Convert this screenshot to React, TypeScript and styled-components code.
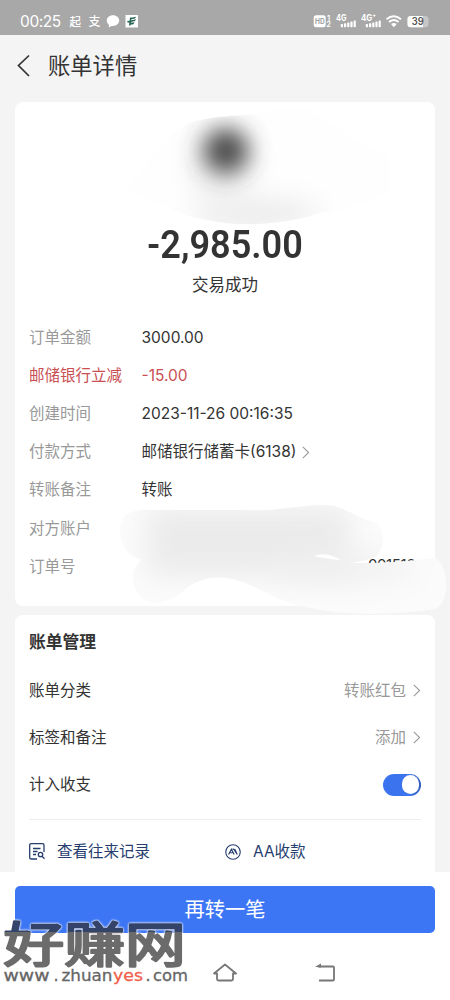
import React from 'react';
import styled, { createGlobalStyle } from 'styled-components';

const GlobalStyle = createGlobalStyle`
  * { box-sizing: border-box; }
  body { margin: 0; background: #fff; font-family: Inter, "Noto Sans CJK SC", sans-serif; color: #333; }
  svg { display: block; flex: none; }
`;
const Phone = styled.div`
  position: relative;
  width: 450px;
  height: 1000px;
  overflow: hidden;
  display: flex;
  flex-direction: column;
  background: #fff;
`;
const StatusBar = styled.div`
  height: 35px;
  flex: none;
  background: #a8a8a8;
  color: #fff;
  display: flex;
  justify-content: space-between;
  padding: 8px 20px 0 20px;
`;
const Clock = styled.span`
  font-size: 15.5px;
  line-height: 28px;
  width: 48px;
  white-space: nowrap;
  letter-spacing: -0.4px;
`;
const StatusGroup = styled.div`
  display: flex;
  height: 28px;
`;
const Page = styled.main`
  height: 837px;
  flex: none;
  overflow: hidden;
  background: #f4f4f4;
`;
const NavBar = styled.header`
  height: 67px;
  padding: 0 16px 6px;
  display: flex;
  align-items: center;
  gap: 17px;
`;
const NavTitle = styled.h1`
  margin: 0;
  font-size: 22.3px;
  line-height: 30px;
  font-weight: 400;
`;
const Card = styled.section<{ $height: number }>`
  height: ${p => p.$height}px;
  margin: 0 15px 9px;
  padding: 0 14px;
  background: #fff;
  border-radius: 8px;
`;
const Summary = styled.div`
  height: 217px;
  padding-top: 120px;
  display: flex;
  flex-direction: column;
  align-items: center;
`;
const Amount = styled.div`
  font-family: Roboto, sans-serif;
  font-size: 38px;
  line-height: 46px;
  font-weight: 600;
  white-space: nowrap;
  transform: scaleX(0.95);
`;
const State = styled.div`
  margin-top: 5px;
  font-size: 16.5px;
  line-height: 24px;
`;
const DetailRow = styled.div<{ $accent?: boolean }>`
  display: flex;
  align-items: center;
  height: 38.1px;
  font-size: 15.5px;
  line-height: 24px;
  white-space: nowrap;
  color: ${p => (p.$accent ? '#c94f52' : '#333')};
`;
const Label = styled.span<{ $accent?: boolean }>`
  width: 112.5px;
  flex: none;
  color: ${p => (p.$accent ? 'inherit' : '#999')};
`;
const Value = styled.span`
  display: flex;
  align-items: center;
  gap: 6px;
`;
const Covered = styled.span`
  padding: 0 0 3px 193px;
  font-size: 15px;
  line-height: 22px;
  letter-spacing: -0.4px;
  word-spacing: 12px;
`;
const SectionTitle = styled.h2`
  margin: 0;
  height: 52px;
  padding-top: 15px;
  font-size: 16.8px;
  line-height: 24px;
  font-weight: 700;
`;
const SettingRow = styled.div`
  height: 47.2px;
  display: flex;
  align-items: center;
  justify-content: space-between;
  font-size: 15.5px;
  line-height: 24px;
`;
const Hint = styled(Value)`
  color: #999;
  gap: 7px;
`;
const Toggle = styled.span`
  width: 38px;
  height: 22px;
  padding: 1.5px 2.5px;
  border-radius: 11px;
  display: flex;
  justify-content: flex-end;
  background: linear-gradient(90deg, #3b73ee 70%, #2f5bbd);
`;
const Knob = styled.span`
  width: 17px;
  height: 18.5px;
  border-radius: 9px;
  background: #fff;
`;
const Links = styled.div`
  margin-top: 10px;
  border-top: 1px solid #eeeeee;
  height: 65px;
  display: grid;
  grid-template-columns: 1fr 1fr;
`;
const LinkItem = styled.a`
  display: flex;
  align-items: center;
  gap: 12px;
  color: #263e6e;
  font-size: 15.5px;
  line-height: 24px;
`;
const Footer = styled.footer`
  padding: 14px 15px 0;
`;
const Submit = styled.button`
  width: 100%;
  height: 46.5px;
  padding: 2px 0 0;
  border: 0;
  border-radius: 5px;
  background: #3c76f5;
  color: #fff;
  font: 400 20.3px/30px Inter, "Noto Sans CJK SC", sans-serif;
`;
const SystemNav = styled.nav`
  display: flex;
  gap: 77px;
  padding: 29px 0 0 198px;
`;
const Overlay = styled.svg`
  position: absolute;
  left: 0;
  top: 0;
  pointer-events: none;
`;
const Halo = styled.g`
  filter: drop-shadow(0 0 1.2px rgba(255, 255, 255, 0.95)) drop-shadow(0 0 0.6px rgba(255, 255, 255, 0.8));
`;

const Chevron = () => (
  <svg width="8" height="13" viewBox="0 0 8 13" fill="none" stroke="#999" strokeWidth="1.100">
    <path d="M.8.9 6.600 6.500.8 12.100" />
  </svg>
);

const NoticeIcons = () => (
  <svg width="72" height="28" viewBox="0 0 72 28" fill="#fff">
    <text x="1.500" y="18" fontSize="11.500" fontWeight="500" fontFamily="Noto Sans CJK SC, sans-serif">起</text>
    <text x="20.500" y="18" fontSize="12" fontWeight="500" fontFamily="Noto Sans CJK SC, sans-serif">支</text>
    <path d="M45 7.200c3.600 0 6.200 2.400 6.200 5.400S48.600 18 45 18l-1.500-.1-2.800 1.500.4-2.500c-1.500-1-2.300-2.500-2.300-4.300 0-3 2.600-5.400 6.200-5.400Z" />
    <rect x="57.500" y="7" width="12.500" height="12.500" />
    <path d="M62 10 68 8.800 67 10.500 62 11.500ZM59 13.200 68 11.200 67 13 59.800 14.700ZM62.500 14.800 66.500 14.200 65.500 16.200 62 16.800ZM62 9.500 63.500 9.500 62.500 17.500 61 17.500Z" fill="#286555" />
  </svg>
);

const Bars = ({ x }: { x: number }) => (
  <g transform={`translate(${x} 0)`}>
    <rect x="0" y="16" width="2.200" height="3.200" rx=".6" />
    <rect x="3.200" y="15.300" width="2.200" height="3.900" rx=".6" />
    <rect x="6.400" y="14.500" width="2.200" height="4.700" rx=".6" />
    <rect x="9.600" y="13.500" width="2.200" height="5.700" rx=".6" />
    <rect x="12.800" y="12.500" width="2.200" height="6.700" rx=".6" />
  </g>
);

const DeviceIcons = () => (
  <svg width="118" height="28" viewBox="0 0 118 28" fill="#fff" fontFamily="Inter, sans-serif">
    <rect x="1.700" y="7.200" width="12" height="12" rx="2.500" />
    <text x="3" y="16" fontSize="7.500" fontWeight="700" fill="#a0a0a0" textLength="9.600" lengthAdjust="spacingAndGlyphs">HD</text>
    <text x="14.900" y="12.500" fontSize="7.500" fontWeight="600">1</text>
    <text x="14.200" y="19.200" fontSize="7.500" fontWeight="600">2</text>
    <text x="24" y="13" fontSize="8.500" fontWeight="700" textLength="10.500" lengthAdjust="spacingAndGlyphs">4G</text>
    <Bars x={28.800} />
    <text x="49" y="13" fontSize="8.500" fontWeight="700" textLength="15" lengthAdjust="spacingAndGlyphs">4G⁺</text>
    <Bars x={53.800} />
    <g fill="none" stroke="#fff" strokeWidth="1.900">
      <path d="M74.500 11.200Q81.800 5.500 89 11.200M77 13.900Q81.800 10 86.600 13.900" />
    </g>
    <path d="M79 16Q81.800 13.800 84.700 16L81.800 19.300Z" />
    <rect x="95.500" y="8" width="21" height="11.300" rx="3.500" fill="#c7c7c7" />
    <path d="M98.500 8H111v11.300H98.500a3 3 0 0 1-3-3V11a3 3 0 0 1 3-3Z" />
    <text x="99.700" y="17.400" fontSize="10" fontWeight="600" fill="#555" textLength="12" lengthAdjust="spacingAndGlyphs">39</text>
  </svg>
);

const Redactions = () => (
  <Overlay width="450" height="1000" viewBox="0 0 450 1000">
    <defs>
      <filter id="soft" x="-100%" y="-100%" width="300%" height="300%"><feGaussianBlur stdDeviation="11" /></filter>
      <filter id="wide" x="-60%" y="-150%" width="220%" height="400%"><feGaussianBlur stdDeviation="14" /></filter>
      <clipPath id="headShape">
        <path d="M125 190C150 160 170 130 192 122C215 116 235 116 255 114C280 108 295 104 309 110C325 120 355 143 390 155V190C370 202 345 210 320 213C287 224 245 228 205 220C175 213 165 205 125 190Z" />
      </clipPath>
      <clipPath id="lineShape">
        <path d="M145 510C120 509 116 528 123 544Q129 558 142 559C129 569 130 589 144 600C160 607 174 600 188 587C210 572 235 576 260 590C285 604 311 609 335 612C370 616 408 613 435 609C450 604 450 566 435 558C404 562 369 564 346 562.500C335 558 325 552 315 557C327 563 355 566 375 557C386 550 386 523 371 521C357 518 344 506 327 505C295 505 280 512 240 510Z" />
        <path d="M338 563Q388 565 416 562V575H338Z" />
      </clipPath>
    </defs>
    <g clipPath="url(#headShape)">
      <rect x="115" y="100" width="290" height="130" fill="#fefefe" />
      <ellipse cx="255" cy="214" rx="65" ry="14" fill="#e9e9e9" filter="url(#wide)" />
      <ellipse cx="222" cy="160" rx="30" ry="38" fill="#e7e7e7" filter="url(#wide)" />
      <circle cx="226" cy="151" r="22" fill="#4c4c4c" filter="url(#soft)" />
    </g>
    <g clipPath="url(#lineShape)">
      <rect x="110" y="500" width="345" height="118" fill="#fbfbfb" />
      <rect x="147" y="507" width="203" height="69" fill="#ebebeb" filter="url(#wide)" />
      <ellipse cx="345" cy="568" rx="75" ry="14" fill="#f0f0f0" filter="url(#wide)" />
    </g>
    <path d="M314 556Q326 551 341 560Q326 559 314 556Z" fill="#fff" />
  </Overlay>
);

const Watermark = () => (
  <Overlay width="450" height="1000" viewBox="0 0 450 1000">
    <defs>
      <linearGradient id="ink" gradientUnits="userSpaceOnUse" x1="0" y1="912" x2="0" y2="952">
        <stop offset=".51" stopColor="#344369" />
        <stop offset=".51" stopColor="#6b6b6b" />
      </linearGradient>
    </defs>
    <Halo>
      <text transform="translate(3.500 0) scale(1.265 1)" x="0" y="962.500" fontFamily="Noto Sans CJK SC, sans-serif" fontSize="48" fontWeight="400" fill="url(#ink)" stroke="url(#ink)" strokeWidth="2.400" strokeLinejoin="round">好赚网</text>
    </Halo>
    <g fontFamily="DejaVu Sans, sans-serif" fontSize="16" fill="#666" stroke="#666" strokeWidth=".3">
      <text x="3.500" y="981" textLength="46" lengthAdjust="spacingAndGlyphs">www</text>
      <text x="53.500" y="981">.</text>
      <text x="61.500" y="981" textLength="51" lengthAdjust="spacingAndGlyphs">zhuan</text>
      <text x="113" y="981" textLength="30" lengthAdjust="spacingAndGlyphs" fill="#f0604c" stroke="#f0604c">yes</text>
      <text x="145.500" y="981">.</text>
      <text x="153" y="981" textLength="35" lengthAdjust="spacingAndGlyphs">com</text>
    </g>
  </Overlay>
);

const details = [
  { label: '订单金额', value: '3000.00' },
  { label: '邮储银行立减', value: '-15.00', accent: true },
  { label: '创建时间', value: '2023-11-26 00:16:35' },
  { label: '付款方式', value: '邮储银行储蓄卡(6138)', link: true },
  { label: '转账备注', value: '转账' },
  { label: '对方账户', value: '' },
];

export default function App() {
  return (
    <Phone>
      <GlobalStyle />
      <StatusBar>
        <StatusGroup><Clock>00:25</Clock><NoticeIcons /></StatusGroup>
        <StatusGroup><DeviceIcons /></StatusGroup>
      </StatusBar>
      <Page>
        <NavBar>
          <svg width="15" height="24" viewBox="0 0 15 24" fill="none" stroke="#333" strokeWidth="1.700"><path d="M13 1.500 2.500 11.500 13 22" /></svg>
          <NavTitle>账单详情</NavTitle>
        </NavBar>
        <Card $height={504}>
          <Summary><Amount>-2,985.00</Amount><State>交易成功</State></Summary>
          {details.map(d => (
            <DetailRow key={d.label} $accent={d.accent}>
              <Label $accent={d.accent}>{d.label}</Label>
              <Value>{d.value}{d.link && <Chevron />}</Value>
            </DetailRow>
          ))}
          <DetailRow><Label>订单号</Label><Covered>26 001516</Covered></DetailRow>
        </Card>
        <Card $height={280}>
          <SectionTitle>账单管理</SectionTitle>
          <SettingRow>账单分类<Hint>转账红包<Chevron /></Hint></SettingRow>
          <SettingRow>标签和备注<Hint>添加<Chevron /></Hint></SettingRow>
          <SettingRow>计入收支<Toggle><Knob /></Toggle></SettingRow>
          <Links>
            <LinkItem>
              <svg width="16" height="17" viewBox="0 0 16 17" fill="none" stroke="#263e6e" strokeWidth="1.300">
                <path d="M8 16H2.200Q.7 16 .7 14.500V2.200Q.7.7 2.200.7H13.500Q15 .7 15 2.200V9M4 5.500H11.500M4 8.500H8.500M4 11.500H7" /><circle cx="11.500" cy="11.500" r="2.200" /><path d="m13 13.300 2.500 2.500" />
              </svg>
              查看往来记录
            </LinkItem>
            <LinkItem>
              <svg width="16" height="16" viewBox="0 0 17 17" fill="none" stroke="#263e6e" strokeWidth="1.200">
                <circle cx="8.500" cy="8.500" r="7.700" /><path d="M3.800 11.200 6.800 5.500 9.700 11.200M5.300 9.300H8M8 5.500H9.300L13 11.200M10.500 5.500 13 11.200" />
              </svg>
              AA收款
            </LinkItem>
          </Links>
        </Card>
      </Page>
      <Footer><Submit>再转一笔</Submit></Footer>
      <SystemNav>
        <svg width="40" height="22" viewBox="0 0 40 22" fill="none" stroke="#777" strokeWidth="1.800" strokeLinejoin="round"><path d="M19.500 18.500H33.500Q35 18.500 35 17V11.500H38L27 2.500 16 11.500H19V17Q19 18.500 20.500 18.500" /></svg>
        <svg width="22" height="22" viewBox="0 0 22 22" fill="none" stroke="#777" strokeWidth="1.800"><path d="M4 18.500H18Q19 18.500 19 17.500V5.500Q19 4.500 18 4.500H3" /><path d="M0 4.800 6 1.500V5.500Z" fill="#777" stroke="none" /></svg>
      </SystemNav>
      <Redactions />
      <Watermark />
    </Phone>
  );
}
